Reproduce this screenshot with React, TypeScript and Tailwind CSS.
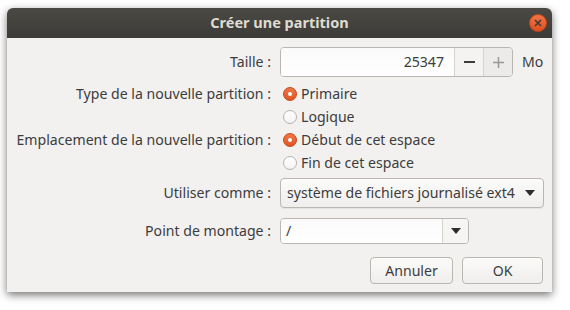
import React from "react";

function Radio({ checked, label }: { checked: boolean; label: string }) {
  return (
    <div className="flex h-[23px] items-center">
      {checked ? (
        <span className="ml-[3px] flex h-[14px] w-[14px] items-center justify-center rounded-full border border-[#c4461c] bg-gradient-to-b from-[#f07746] to-[#e05422]">
          <span className="h-[4px] w-[4px] rounded-full bg-white" />
        </span>
      ) : (
        <span className="ml-[3px] h-[14px] w-[14px] rounded-full border border-[#b5b3ae] bg-gradient-to-b from-white to-[#f4f3f2]" />
      )}
      <span className="ml-[4px]">{label}</span>
    </div>
  );
}

function Caret() {
  return (
    <svg width="10" height="6" viewBox="0 0 10 6">
      <path d="M0 0h10L5 6z" fill="#2e2e2e" />
    </svg>
  );
}

export default function App() {
  return (
    <div
      className="h-[310px] w-[570px] bg-white pl-[7px] pt-[8px] text-[#3c3c3c]"
      style={{ fontFamily: '"Noto Sans", sans-serif', fontSize: "14.1px" }}
    >
      <div className="flex h-[284px] w-[545px] flex-col overflow-hidden rounded-t-[6px] bg-[#f2f1f0] shadow-[0_3px_8px_rgba(0,0,0,0.55)]">
        <div className="relative flex h-[30px] items-center justify-center bg-gradient-to-b from-[#4a4944] to-[#3c3b37]">
          <span className="text-[14.5px] font-bold text-[#dfdbd2]">Créer une partition</span>
          <span className="absolute right-[5px] top-[6px] flex h-[18px] w-[18px] items-center justify-center rounded-full border border-[#c4461c] bg-gradient-to-b from-[#f17444] to-[#df4f1c]">
            <svg width="8" height="8" viewBox="0 0 8 8">
              <path d="M1 1L7 7M7 1L1 7" stroke="#3c3b37" strokeWidth="1.6" />
            </svg>
          </span>
        </div>

        <div className="grid grid-cols-[264px_1fr] gap-x-[9px] pt-[9px]">
          <div className="flex h-[30px] items-center justify-end">Taille :</div>
          <div className="flex h-[30px] items-center">
            <div className="flex h-[30px] w-[233px] overflow-hidden rounded-[4px] border border-[#bab7b2] bg-white">
              <div className="flex flex-1 items-center justify-end bg-gradient-to-b from-[#fafafa] to-white pr-[10px]">25347</div>
              <div className="flex w-[29px] items-center justify-center border-l border-[#d5d3cf] bg-[#f4f3f2]">
                <span className="h-[2px] w-[11px] bg-[#3c3c3c]" />
              </div>
              <div className="flex w-[29px] items-center justify-center border-l border-[#d5d3cf] bg-[#ecebea]">
                <svg width="11" height="11" viewBox="0 0 11 11">
                  <path d="M5.5 0v11M0 5.5h11" stroke="#9a9894" strokeWidth="1.5" />
                </svg>
              </div>
            </div>
            <span className="ml-[9px]">Mo</span>
          </div>

          <div className="mt-[5px] flex h-[23px] items-center justify-end">Type de la nouvelle partition :</div>
          <div className="mt-[5px] flex flex-col">
            <Radio checked label="Primaire" />
            <Radio checked={false} label="Logique" />
          </div>

          <div className="flex h-[23px] items-center justify-end">Emplacement de la nouvelle partition :</div>
          <div className="flex flex-col">
            <Radio checked label="Début de cet espace" />
            <Radio checked={false} label="Fin de cet espace" />
          </div>

          <div className="mt-[4px] flex h-[30px] items-center justify-end">Utiliser comme :</div>
          <div className="mt-[4px] flex h-[30px]">
            <div className="flex h-[30px] w-[264px] items-center justify-between rounded-[4px] border border-[#bab7b2] bg-gradient-to-b from-[#fbfbfa] to-[#efeeec] pl-[6px] pr-[8px] shadow-[0_1px_0_rgba(0,0,0,0.06)]">
              <span>système de fichiers journalisé ext4</span>
              <Caret />
            </div>
          </div>

          <div className="mt-[10px] flex h-[26px] items-center justify-end">Point de montage :</div>
          <div className="mt-[10px] flex h-[26px]">
            <div className="flex h-[26px] w-[189px] overflow-hidden rounded-[4px] border border-[#bab7b2]">
              <div className="flex flex-1 items-center bg-gradient-to-b from-[#fafafa] to-white pl-[5px]">/</div>
              <div className="flex w-[26px] items-center justify-center border-l border-[#d5d3cf] bg-[#f6f5f4]">
                <Caret />
              </div>
            </div>
          </div>
        </div>

        <div className="mt-[13px] flex justify-end gap-[9px] pr-[9px]">
          <button className="h-[27px] w-[83px] rounded-[4px] border border-[#bab7b2] bg-gradient-to-b from-[#fbfbfa] to-[#efeeec] text-[#3c3c3c]">Annuler</button>
          <button className="h-[27px] w-[81px] rounded-[4px] border border-[#bab7b2] bg-gradient-to-b from-[#fbfbfa] to-[#efeeec] text-[#3c3c3c]">OK</button>
        </div>
      </div>
    </div>
  );
}
